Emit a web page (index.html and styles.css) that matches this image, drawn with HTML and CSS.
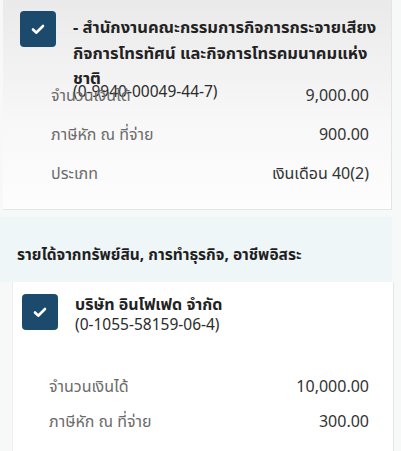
FILE: index.html
```html
<!DOCTYPE html>
<html lang="th">
<head>
  <meta charset="UTF-8" />
  <title>รายการเงินได้</title>
  <link rel="stylesheet" href="styles.css">
</head>
<body>
  <div class="card first">
    <div class="payer">
      <span class="check">
        <svg viewBox="0 0 16 16" width="16" height="16"><path d="M3 8.5l3.2 3.2L13 5" fill="none" stroke="#fff" stroke-width="2.6" stroke-linecap="round" stroke-linejoin="round"/></svg>
      </span>
      <div class="payer-text">
        <div class="name">- สำนักงานคณะกรรมการกิจการกระจายเสียง<br>กิจการโทรทัศน์ และกิจการโทรคมนาคมแห่ง<br>ชาติ</div>
        <div class="taxid">(0-9940-00049-44-7)</div>
      </div>
    </div>
    <div class="row"><span class="label">จำนวนเงินได้</span><span class="value">9,000.00</span></div>
    <div class="row"><span class="label">ภาษีหัก ณ ที่จ่าย</span><span class="value">900.00</span></div>
    <div class="row"><span class="label">ประเภท</span><span class="value">เงินเดือน 40(2)</span></div>
  </div>

  <div class="section">รายได้จากทรัพย์สิน, การทำธุรกิจ, อาชีพอิสระ</div>

  <div class="card second">
    <div class="payer">
      <span class="check">
        <svg viewBox="0 0 16 16" width="16" height="16"><path d="M3 8.5l3.2 3.2L13 5" fill="none" stroke="#fff" stroke-width="2.6" stroke-linecap="round" stroke-linejoin="round"/></svg>
      </span>
      <div class="payer-text">
        <div class="name">บริษัท อินโฟเฟด จำกัด</div>
        <div class="taxid">(0-1055-58159-06-4)</div>
      </div>
    </div>
    <div class="row"><span class="label">จำนวนเงินได้</span><span class="value">10,000.00</span></div>
    <div class="row"><span class="label">ภาษีหัก ณ ที่จ่าย</span><span class="value">300.00</span></div>
  </div>
</body>
</html>
```

FILE: styles.css
```css
body {
  margin: 0;
  background: #f7f8f8;
  font-family: "Noto Sans", "Noto Sans Thai", "Noto Sans CJK SC", sans-serif;
  color: #2b2b2b;
}
.card {
  box-sizing: border-box;
}
.first {
  width: 389px;
  margin-left: 3px;
  padding: 11px 22px 0 17px;
  height: 210px;
  background: linear-gradient(#eaeaea, #f8f8f8 60%, #fdfdfd);
  border-right: 1px solid #e4e4e4;
  border-bottom: 1px solid #e6e6e6;
}
.payer {
  display: flex;
  gap: 17px;
}
.check {
  flex: none;
  width: 36px;
  height: 36px;
  border-radius: 4px;
  background: #1c4a6c;
  display: flex;
  align-items: center;
  justify-content: center;
}
.first .payer {
  height: 65px;
}
.name {
  font-weight: bold;
  font-size: 16.5px;
  line-height: 25.5px;
  color: #222;
  white-space: nowrap;
  margin-top: 3px;
}
.taxid {
  font-size: 15.5px;
  line-height: 18px;
  color: #2b2b2b;
}
.first .taxid {
  margin-top: -9px;
}
.row {
  display: flex;
  justify-content: space-between;
  padding-left: 31px;
  font-size: 16px;
  line-height: 39px;
}
.label {
  color: #6b6b6b;
}
.value {
  color: #333;
}
.section {
  margin-top: 7px;
  width: 392px;
  height: 65px;
  box-sizing: border-box;
  padding: 10px 0 0 17px;
  display: flex;
  align-items: center;
  font-weight: bold;
  font-size: 15.5px;
  background: #eef6f8;
  color: #1f1f1f;
}
.second {
  width: 382px;
  margin-left: 12px;
  padding: 12px 24px 20px 9px;
  background: #fff;
  border-left: 1px solid #eeeeee;
  border-right: 1px solid #e6e6e6;
  height: 169px;
}
.second .payer {
  height: 75px;
}
.second .name {
  margin-top: -1px;
  line-height: 22px;
  font-size: 16px;
}
.second .row {
  padding-left: 27px;
  line-height: 35px;
}
```
